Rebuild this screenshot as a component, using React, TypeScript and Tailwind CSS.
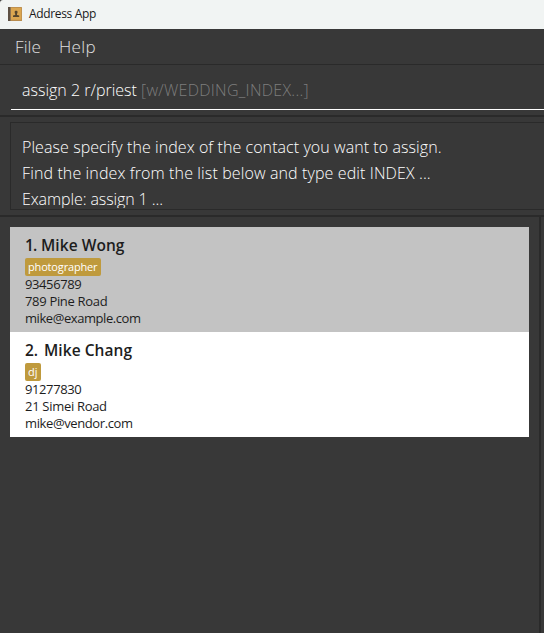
import React from "react";

type Contact = {
  index: string;
  name: string;
  tag: string;
  tagClass: string;
  lines: { text: string; tracking: string }[];
  bg: string;
  indexClass: string;
};

const contacts: Contact[] = [
  {
    index: "1.",
    name: "Mike Wong",
    tag: "photographer",
    tagClass: "w-[76px] tracking-[-0.16px]",
    lines: [
      { text: "93456789", tracking: "tracking-[-0.4px]" },
      { text: "789 Pine Road", tracking: "tracking-[-0.32px]" },
      { text: "mike@example.com", tracking: "tracking-[-0.43px]" },
    ],
    bg: "bg-[#c3c3c3]",
    indexClass: "w-[16px] tracking-[-0.8px]",
  },
  {
    index: "2.",
    name: "Mike Chang",
    tag: "dj",
    tagClass: "w-[16px]",
    lines: [
      { text: "91277830", tracking: "tracking-[-0.4px]" },
      { text: "21 Simei Road", tracking: "tracking-[-0.3px]" },
      { text: "mike@vendor.com", tracking: "tracking-[-0.39px]" },
    ],
    bg: "bg-white",
    indexClass: "w-[19px]",
  },
];

function AppIcon() {
  return (
    <svg width="14" height="14" viewBox="0 0 14 14" className="shrink-0">
      <rect x="0" y="0" width="14" height="14" rx="0.5" fill="#b98c4e" />
      <rect x="3" y="0.8" width="10.3" height="12" fill="#dba650" />
      <rect x="0" y="0" width="2" height="14" fill="#5d5044" />
      <rect x="2" y="0" width="1" height="14" fill="#8f7350" />
      <rect x="6.7" y="3.8" width="2.8" height="3" rx="1" fill="#55452d" />
      <rect x="7.2" y="6" width="1.8" height="3" fill="#55452d" />
      <path d="M5 10V8.6L7 8.1h2.2l2 .5V10z" fill="#55452d" />
    </svg>
  );
}

function ContactCard({ contact }: { contact: Contact }) {
  return (
    <div className={`h-[105px] pl-[15px] pt-[8px] text-[#1d1d1d] ${contact.bg}`}>
      <div className="flex h-[20px] items-center whitespace-nowrap text-[15.5px] font-semibold leading-[20px]">
        <span className={`shrink-0 ${contact.indexClass}`}>{contact.index}</span>
        <span className="tracking-[0.05px]">{contact.name}</span>
      </div>
      <div className="mt-[3px] flex h-[18px]">
        <span
          className={`h-[18px] whitespace-nowrap rounded-[2px] bg-[#bf9a3d] px-[3px] text-[11px] font-medium leading-[17px] text-white ${contact.tagClass}`}
        >
          {contact.tag}
        </span>
      </div>
      {contact.lines.map((line) => (
        <div key={line.text} className={`h-[17px] whitespace-nowrap text-[13px] leading-[17px] ${line.tracking}`}>
          {line.text}
        </div>
      ))}
    </div>
  );
}

export default function App() {
  return (
    <div className="flex h-[633px] w-[544px] flex-col overflow-hidden bg-[#383838] font-['Open_Sans','Noto_Sans',sans-serif]">
      <header className="flex h-[29px] shrink-0 items-center gap-[7px] rounded-tl-[3px] bg-[#f1f4f3] pb-[2px] pl-2 text-[12px] text-[#1a1a1a]">
        <AppIcon />
        <span className="tracking-[-0.35px]">Address App</span>
      </header>
      <nav className="flex h-[36px] shrink-0 items-center gap-[18px] border-b border-[#2a2a2a] pl-[15px] text-[17px] font-light text-[#e0e0e0]">
        <span className="tracking-[0.1px]">File</span>
        <span className="tracking-[0.4px]">Help</span>
      </nav>
      <section className="h-[52px] shrink-0 border-b-2 border-[#2a2a2a] pl-[11px]">
        <div className="flex h-[45px] items-center whitespace-pre border-b border-white pl-[11px] pt-[5px] text-[16px] font-light text-white">
          <span>assign 2 r/priest </span>
          <span className="tracking-[0.28px] text-[#7d7d7d]">[w/WEDDING_INDEX...]</span>
        </div>
      </section>
      <section className="h-[100px] shrink-0 border-b-2 border-[#2a2a2a] pl-[10px] pt-[5px]">
        <div className="h-[88px] border border-r-0 border-[#2a2a2a] pl-[11px]">
          <div className="h-[85px] overflow-hidden whitespace-nowrap pt-[11px] text-[16px] font-light leading-[26px] text-white">
            <p className="tracking-[0.07px]">Please specify the index of the contact you want to assign.</p>
            <p className="tracking-[0.12px]">Find the index from the list below and type edit INDEX ...</p>
            <p className="tracking-[-0.1px]">Example: assign 1 ...</p>
          </div>
        </div>
      </section>
      <main className="flex flex-1">
        <section className="w-[539px] px-[10px] pt-[10px]">
          {contacts.map((contact) => (
            <ContactCard key={contact.name} contact={contact} />
          ))}
        </section>
        <div className="w-[2px] bg-[#2a2a2a]" />
      </main>
    </div>
  );
}
